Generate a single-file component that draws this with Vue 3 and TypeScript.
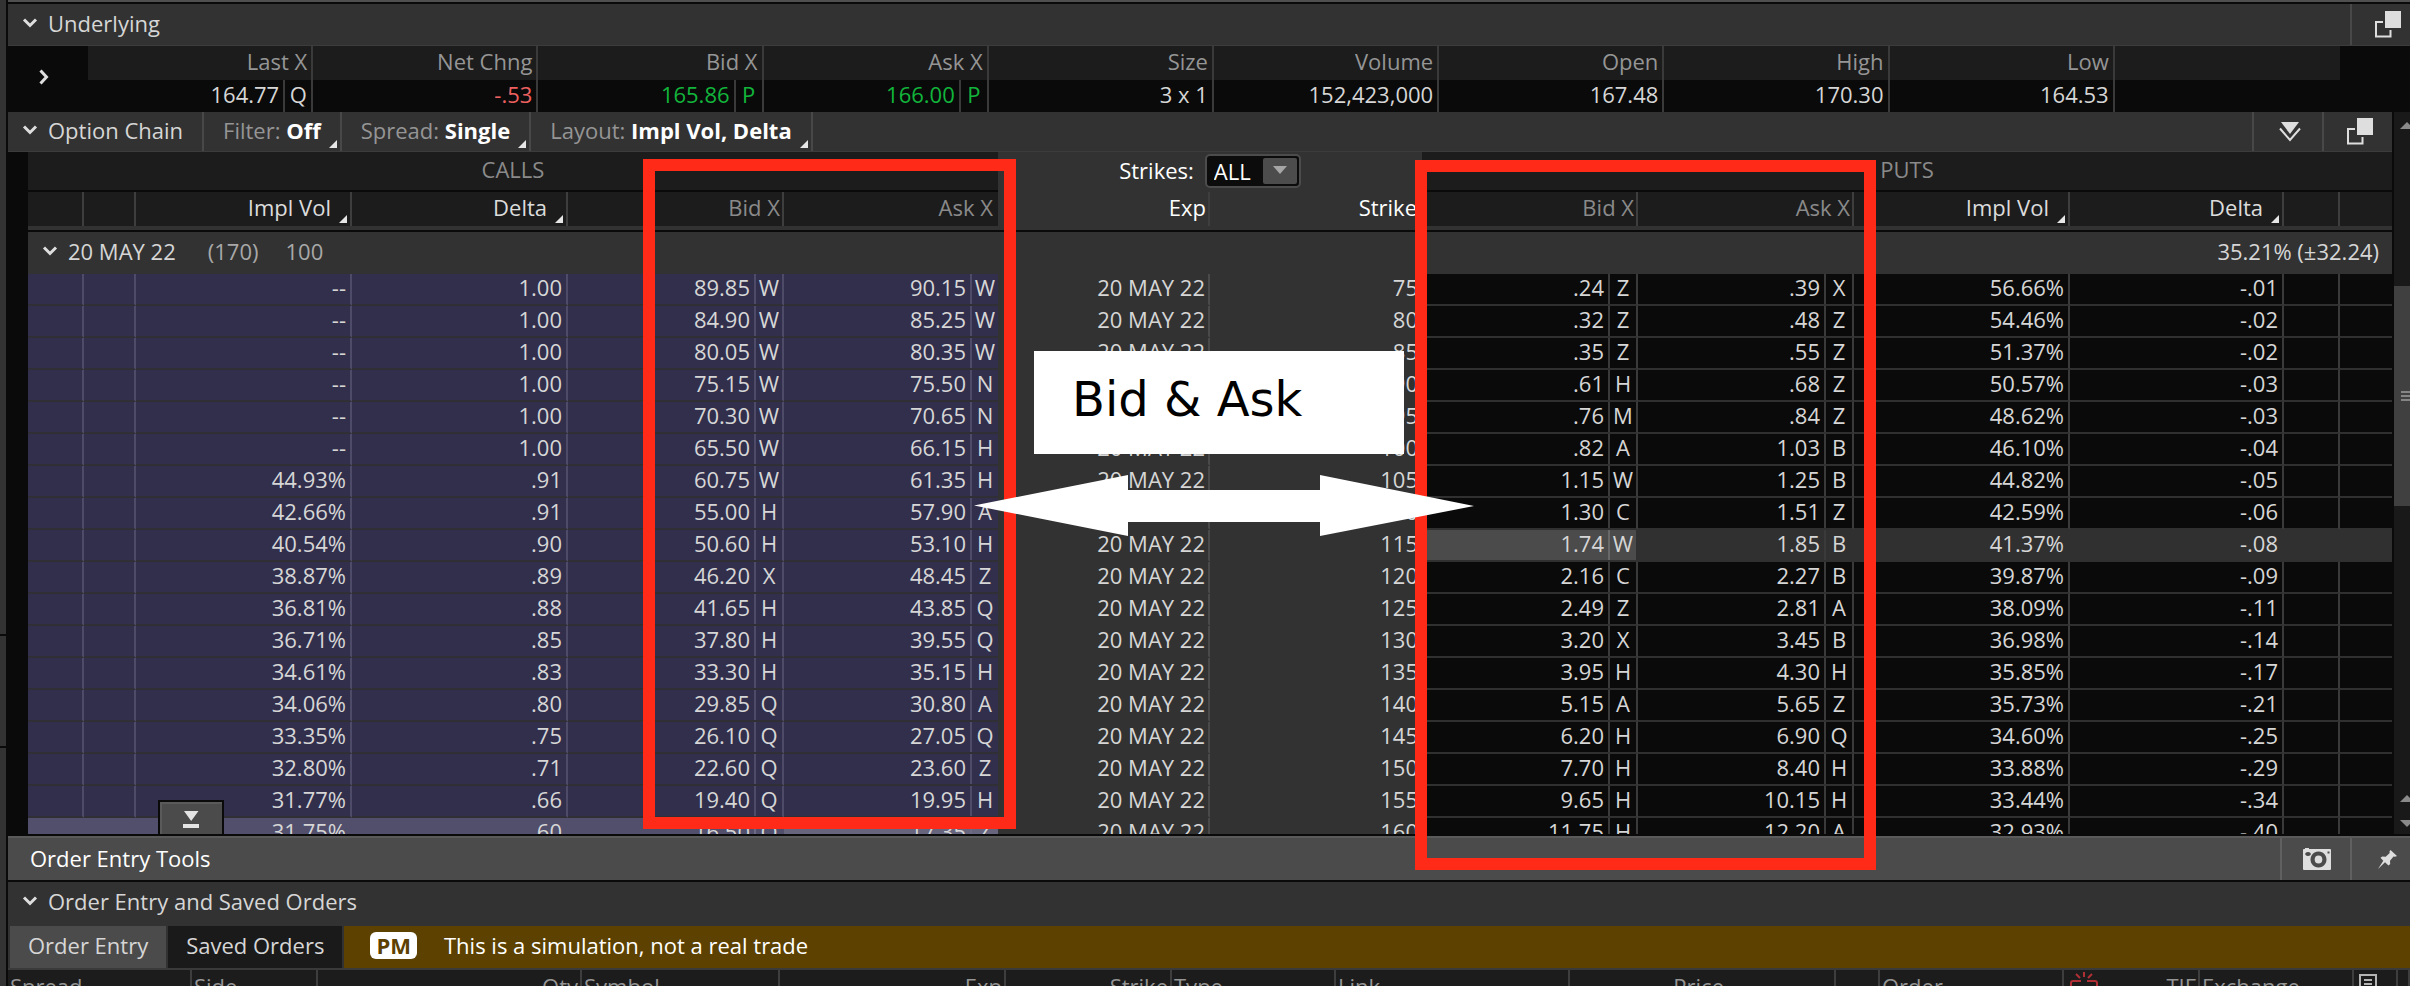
<script setup lang="ts">
import { ref } from 'vue'

interface Quote {
  label: string
  value: string
  exchange?: string
  tone?: 'up' | 'down'
}

interface Side {
  iv: string
  delta: string
  bid: string
  bidX: string
  ask: string
  askX: string
}

interface Row {
  strike: string
  call: Side
  put: Side
}

const quotes: Quote[] = [
  { label: 'Last X', value: '164.77', exchange: 'Q' },
  { label: 'Net Chng', value: '-.53', tone: 'down' },
  { label: 'Bid X', value: '165.86', exchange: 'P', tone: 'up' },
  { label: 'Ask X', value: '166.00', exchange: 'P', tone: 'up' },
  { label: 'Size', value: '3 x 1' },
  { label: 'Volume', value: '152,423,000' },
  { label: 'Open', value: '167.48' },
  { label: 'High', value: '170.30' },
  { label: 'Low', value: '164.53' },
  { label: '', value: '' },
]

const filters = [
  { name: 'Filter:', value: 'Off' },
  { name: 'Spread:', value: 'Single' },
  { name: 'Layout:', value: 'Impl Vol, Delta' },
]

// call IV, delta, bid, X, ask, X | strike | put bid, X, ask, X, IV, delta
const source = `
-- 1.00 89.85 W 90.15 W 75 .24 Z .39 X 56.66% -.01
-- 1.00 84.90 W 85.25 W 80 .32 Z .48 Z 54.46% -.02
-- 1.00 80.05 W 80.35 W 85 .35 Z .55 Z 51.37% -.02
-- 1.00 75.15 W 75.50 N 90 .61 H .68 Z 50.57% -.03
-- 1.00 70.30 W 70.65 N 95 .76 M .84 Z 48.62% -.03
-- 1.00 65.50 W 66.15 H 100 .82 A 1.03 B 46.10% -.04
44.93% .91 60.75 W 61.35 H 105 1.15 W 1.25 B 44.82% -.05
42.66% .91 55.00 H 57.90 A 110 1.30 C 1.51 Z 42.59% -.06
40.54% .90 50.60 H 53.10 H 115 1.74 W 1.85 B 41.37% -.08
38.87% .89 46.20 X 48.45 Z 120 2.16 C 2.27 B 39.87% -.09
36.81% .88 41.65 H 43.85 Q 125 2.49 Z 2.81 A 38.09% -.11
36.71% .85 37.80 H 39.55 Q 130 3.20 X 3.45 B 36.98% -.14
34.61% .83 33.30 H 35.15 H 135 3.95 H 4.30 H 35.85% -.17
34.06% .80 29.85 Q 30.80 A 140 5.15 A 5.65 Z 35.73% -.21
33.35% .75 26.10 Q 27.05 Q 145 6.20 H 6.90 Q 34.60% -.25
32.80% .71 22.60 Q 23.60 Z 150 7.70 H 8.40 H 33.88% -.29
31.77% .66 19.40 Q 19.95 H 155 9.65 H 10.15 H 33.44% -.34
31.75% .60 16.50 Q 17.35 Z 160 11.75 H 12.20 A 32.93% -.40`

const rows: Row[] = source.trim().split('\n').map((line) => {
  const c = line.split(' ')
  return {
    strike: c[6],
    call: { iv: c[0], delta: c[1], bid: c[2], bidX: c[3], ask: c[4], askX: c[5] },
    put: { bid: c[7], bidX: c[8], ask: c[9], askX: c[10], iv: c[11], delta: c[12] },
  }
})

const strikes = ref('ALL')
const tab = ref('Order Entry')
const tabs = ['Order Entry', 'Saved Orders']
</script>

<template>
  <div class="app">
    <aside class="rail"><i class="r1"></i><i class="r2"></i></aside>
    <main class="main">
      <header class="bar underlying">
        <button class="title">
          <svg class="chev" viewBox="0 0 16 10"><path d="M2 1.500 8 7.500 14 1.500" /></svg>Underlying
        </button>
        <button class="tool short" aria-label="Detach underlying">
          <svg class="pop" viewBox="0 0 26 27"><path d="M10 0h16v17H10z" fill="#dedede" /><path d="M8 11H1v14.500h14.500V19" fill="none" stroke="#dedede" stroke-width="2" /></svg>
        </button>
      </header>

      <section class="quote">
        <button class="expand" aria-label="Expand">
          <svg viewBox="0 0 10 16"><path d="M1.500 1.500 7.500 8 1.500 14.500" /></svg>
        </button>
        <div class="quote-body">
          <table class="qt">
            <thead>
              <tr><th v-for="q in quotes" :key="q.label">{{ q.label }}</th></tr>
            </thead>
            <tbody>
              <tr>
                <td v-for="q in quotes" :key="q.label" :class="q.tone">
                  <div class="pair"><span class="num">{{ q.value }}</span><span v-if="q.exchange" class="ex">{{ q.exchange }}</span></div>
                </td>
              </tr>
            </tbody>
          </table>
        </div>
      </section>

      <section class="chain-area">
        <div class="chain">
          <header class="bar option">
            <button class="title lined">
              <svg class="chev" viewBox="0 0 16 10"><path d="M2 1.500 8 7.500 14 1.500" /></svg>Option Chain
            </button>
            <button v-for="f in filters" :key="f.name" class="filter corner">{{ f.name }} <b>{{ f.value }}</b></button>
            <span class="grow"></span>
            <button class="tool" aria-label="Collapse all">
              <svg class="down" viewBox="0 0 22 20"><path d="M2 0h18l-9 12z" fill="#dedede" /><path d="M1 6.500 11 18 21 6.500" fill="none" stroke="#dedede" stroke-width="2" /></svg>
            </button>
            <button class="tool" aria-label="Detach option chain">
              <svg class="pop" viewBox="0 0 26 27"><path d="M10 0h16v17H10z" fill="#dedede" /><path d="M8 11H1v14.500h14.500V19" fill="none" stroke="#dedede" stroke-width="2" /></svg>
            </button>
          </header>

          <table class="ct">
            <colgroup>
              <col class="w56" /><col class="w52" /><col class="w216" /><col class="w216" /><col class="w216" /><col class="w214" />
              <col class="w212" /><col class="w212" />
              <col class="w216" /><col class="w216" /><col class="w216" /><col class="w214" /><col class="w56" /><col class="w52" />
            </colgroup>
            <thead>
              <tr class="sides">
                <th colspan="6">CALLS</th>
                <th colspan="2" class="mid">
                  <div class="strikes">
                    <label for="strikes">Strikes:</label>
                    <span class="select">
                      <select id="strikes" v-model="strikes"><option>ALL</option></select>
                      <span class="drop"><svg viewBox="0 0 14 8"><path d="M0 0h14L7 8z" fill="#a6a6a6" /></svg></span>
                    </span>
                  </div>
                </th>
                <th colspan="6">PUTS</th>
              </tr>
              <tr class="cols">
                <th></th><th></th>
                <th class="sort corner">Impl Vol</th><th class="sort corner">Delta</th>
                <th>Bid X</th><th class="open">Ask X</th>
                <th class="mid">Exp</th><th class="mid open">Strike</th>
                <th>Bid X</th><th>Ask X</th>
                <th class="sort corner">Impl Vol</th><th class="sort corner">Delta</th>
                <th></th><th class="open"></th>
              </tr>
              <tr class="rule"><td colspan="14"></td></tr>
            </thead>
            <tbody>
              <tr class="group">
                <th colspan="14">
                  <div class="groupline">
                    <button class="gtitle">
                      <svg class="chev" viewBox="0 0 16 10"><path d="M2 1.500 8 7.500 14 1.500" /></svg>20 MAY 22
                    </button>
                    <span class="dim">(170)</span><span class="dim">100</span>
                    <span class="move">35.21% (±32.24)</span>
                  </div>
                </th>
              </tr>
              <tr v-for="r in rows" :key="r.strike" :class="{ hover: r.strike === '115', otm: r.strike === '160' }">
                <td class="call"></td><td class="call"></td>
                <td class="call pad">{{ r.call.iv }}</td>
                <td class="call pad">{{ r.call.delta }}</td>
                <td class="call"><div class="pair"><span class="num">{{ r.call.bid }}</span><span class="ex">{{ r.call.bidX }}</span></div></td>
                <td class="call open ask"><div class="pair"><span class="num">{{ r.call.ask }}</span><span class="ex">{{ r.call.askX }}</span></div></td>
                <td class="mid">20 MAY 22</td>
                <td class="mid open">{{ r.strike }}</td>
                <td class="put bid"><div class="pair"><span class="num">{{ r.put.bid }}</span><span class="ex">{{ r.put.bidX }}</span></div></td>
                <td class="put"><div class="pair"><span class="num">{{ r.put.ask }}</span><span class="ex">{{ r.put.askX }}</span></div></td>
                <td class="put pad">{{ r.put.iv }}</td>
                <td class="put pad">{{ r.put.delta }}</td>
                <td class="put"></td><td class="put open"></td>
              </tr>
            </tbody>
          </table>
        </div>
        <div class="scroll">
          <svg class="tri" viewBox="0 0 14 7"><path d="M7 0l7 7H0z" /></svg>
          <div class="track"><div class="thumb"><i></i><i></i><i></i></div></div>
          <svg class="tri" viewBox="0 0 14 7"><path d="M7 0l7 7H0z" /></svg>
          <svg class="tri last" viewBox="0 0 14 7"><path d="M7 7l7-7H0z" /></svg>
        </div>
        <button class="handle" aria-label="Collapse order entry tools">
          <svg viewBox="0 0 16 17"><path d="M1 0h14.500L8.200 10z M0 13h16v4H0z" fill="#e4e4e4" /></svg>
        </button>
      </section>

      <footer class="dock">
        <div class="bar tools">
          <span class="toolname">Order Entry Tools</span>
          <button class="tool" aria-label="Take snapshot">
            <svg class="cam" viewBox="0 0 28 22">
              <path fill-rule="evenodd" fill="#dedede" d="M2 0h4v1h21q1 0 1 1v19q0 1-1 1H1q-1 0-1-1V2q0-1 1-1h1zM15.500 3.500a8 8 0 1 0 .01 0zM5 4a2.800 2 0 1 0 .01 0zM24.500 3.500v2h2v-2z" />
              <ellipse cx="15.500" cy="11.500" rx="3.800" ry="4" fill="#dedede" />
            </svg>
          </button>
          <button class="tool short" aria-label="Pin">
            <svg class="pin" viewBox="0 0 19 19"><path fill="#dedede" d="M12.500 0 19 6l-2 .8-1.500-.2-3.500 4.200.2 3.200-1.700 1.500-3.500-3.300L0 19l5.300-8.200L2.500 7.800 4.300 6.500l3.400.3 4-3.800-.2-1.800z" /></svg>
          </button>
        </div>
        <div class="bar saved">
          <button class="title"><svg class="chev" viewBox="0 0 16 10"><path d="M2 1.500 8 7.500 14 1.500" /></svg>Order Entry and Saved Orders</button>
        </div>
        <div class="tabs">
          <button v-for="t in tabs" :key="t" class="tab" :class="{ on: tab === t }" @click="tab = t">{{ t }}</button>
          <div class="notice"><b>PM</b><span>This is a simulation, not a real trade</span></div>
        </div>
        <table class="ot">
          <colgroup>
            <col class="o184" /><col class="o126" /><col class="o264" /><col class="o198" /><col class="o226" /><col class="o166" /><col class="o164" /><col class="o234" /><col class="o266" /><col class="o44" /><col class="o184" /><col class="o136" /><col class="o154" /><col class="o44" /><col class="o12" />
          </colgroup>
          <thead>
            <tr>
              <th>Spread</th><th>Side</th><th class="right">Qty</th><th>Symbol</th><th class="right">Exp</th><th class="right">Strike</th><th>Type</th><th>Link</th>
              <th class="right price">Price</th><th></th><th>Order</th>
              <th>
                <div class="tif">
                  <svg class="link" viewBox="0 0 28 24"><path d="M1 23V11q0-2 2-2h8M17 9h8q2 0 2 2v12M14 0v5M6 2l4 4M22 2l-4 4" fill="none" stroke="#b02f35" stroke-width="2" /></svg>
                  <span>TIF</span>
                </div>
              </th>
              <th>Exchange</th>
              <th><svg class="doc" viewBox="0 0 24 24"><path d="M1 24V1h16v12M5 6h8M5 10h8M5 14h8M20 12v10M16 18l4 4 4-4" fill="none" stroke="#b4b4b4" stroke-width="2" /></svg></th>
              <th></th>
            </tr>
          </thead>
        </table>
      </footer>
    </main>

    <div class="mark calls-mark"></div>
    <div class="mark puts-mark"></div>
    <div class="callout">Bid &amp; Ask</div>
    <svg class="arrow" viewBox="0 0 500 62"><path fill="#fff" d="M0 30.500 154 0v15h192V0l154 31-154 30V47H154v14z" /></svg>
  </div>
</template>

<style>
body {
  margin: 0;
  background: #0a0a0a;
  overflow: hidden;
}
</style>

<style scoped>
* {
  box-sizing: border-box;
}
.app {
  position: relative;
  display: flex;
  height: 100vh;
  overflow: hidden;
  background: #0a0a0a;
  color: #d6d6d6;
  font: 22px/28px "Open Sans", "Noto Sans", sans-serif;
}
button,
select {
  font: inherit;
  color: inherit;
  background: none;
  border: 0;
  margin: 0;
  padding: 0;
  text-align: left;
  white-space: nowrap;
}
svg {
  display: block;
  flex: none;
}
table {
  width: 100%;
  table-layout: fixed;
  border-collapse: separate;
  border-spacing: 0;
}
th,
td {
  padding: 0;
  font-weight: 400;
  white-space: nowrap;
}
.rail {
  flex: 0 0 6px;
  margin-right: 2px;
  background: #333;
  display: flex;
  flex-direction: column;
}
.rail i {
  height: 2px;
  background: #0a0a0a;
}
.r1 {
  margin-top: 634px;
}
.r2 {
  margin-top: 110px;
}
.main {
  flex: 1;
  min-width: 0;
  display: flex;
  flex-direction: column;
  border-top: 2px solid #4f4f4f;
  padding-top: 2px;
}
.bar {
  display: flex;
  align-items: stretch;
  background: #323232;
  flex: none;
}
.underlying {
  height: 42px;
  justify-content: space-between;
  border-bottom: 1px solid #3c3c3c;
}
.title {
  display: flex;
  align-items: center;
  padding: 0 19px 4px 14px;
}
.chev {
  width: 16px;
  height: 10px;
  margin-right: 10px;
  fill: none;
  stroke: #dedede;
  stroke-width: 3;
}
.tool {
  width: 70px;
  border-left: 2px solid #484848;
  padding-left: 23px;
  display: flex;
  align-items: center;
}
.short {
  width: 60px;
}
.pop {
  width: 26px;
  height: 27px;
}
.down {
  width: 22px;
  height: 20px;
  margin-left: 2px;
}
.quote {
  display: flex;
  flex: none;
  height: 66px;
  padding-right: 70px;
}
.expand {
  width: 80px;
  padding: 0 0 4px 31px;
}
.expand svg {
  width: 10px;
  height: 16px;
  fill: none;
  stroke: #dedede;
  stroke-width: 3;
}
.quote-body {
  flex: 1;
  min-width: 0;
}
.qt th {
  height: 34px;
  padding: 0 4px 4px 0;
  background: #1c1c1c;
  color: #959595;
  text-align: right;
}
.qt th,
.qt td {
  border-right: 2px solid #3a3a3a;
}
.qt th:last-child,
.qt td:last-child {
  border-right: 0;
}
.qt td {
  height: 32px;
}
.qt .pair {
  height: 32px;
  line-height: 28px;
}
.qt .up {
  color: #12b53b;
}
.qt .down {
  color: #ee6060;
}
.pair {
  display: flex;
  justify-content: flex-end;
  height: 30px;
  line-height: 26px;
}
.num {
  padding-right: 4px;
}
.ex {
  width: 28px;
  border-left: 2px solid #3a3a3a;
  text-align: center;
}
.chain-area {
  position: relative;
  flex: 1;
  min-height: 0;
  overflow: hidden;
  display: flex;
}
.chain {
  flex: 1;
  min-width: 0;
}
.option {
  height: 40px;
  border-bottom: 1px solid #3c3c3c;
}
.lined {
  border-right: 2px solid #484848;
}
.filter {
  padding: 0 19px 4px;
  border-right: 2px solid #484848;
  color: #959595;
}
.filter b {
  color: #fff;
}
.corner {
  position: relative;
}
.corner::after {
  content: "";
  position: absolute;
  right: 3px;
  bottom: 3px;
  border-left: 8px solid transparent;
  border-bottom: 8px solid #e6e6e6;
}
.grow {
  flex: 1;
}
.ct {
  border-left: 20px solid #0a0a0a;
}
.w52 { width: 52px; }
.w56 { width: 56px; }
.w212 { width: 212px; }
.w214 { width: 214px; }
.w216 { width: 216px; }
.sides th {
  height: 40px;
  padding-bottom: 4px;
  background: #1c1c1c;
  border-bottom: 2px solid #0a0a0a;
  color: #8a8a8a;
  text-align: center;
}
.ct .mid {
  background: #323232;
  color: #fff;
  text-align: right;
}
.ct .sides .mid {
  border-color: #323232;
  text-align: center;
  padding: 0;
}
.strikes {
  display: flex;
  align-items: center;
  justify-content: center;
  gap: 11px;
}
.strikes label {
  padding-bottom: 2px;
}
.select {
  position: relative;
  width: 96px;
  height: 34px;
}
.select select {
  appearance: none;
  width: 100%;
  height: 100%;
  padding: 0 38px 0 7px;
  border: 2px solid #4c4c4c;
  border-radius: 5px;
  background: #0c0c0c;
  color: #fff;
}
.drop {
  position: absolute;
  top: 4px;
  right: 4px;
  width: 34px;
  height: 26px;
  border-radius: 2px;
  background: #4c4c4c;
  pointer-events: none;
}
.drop svg {
  width: 14px;
  height: 8px;
  margin: 8px 10px;
}
.cols th {
  height: 34px;
  padding: 0 2px 4px 0;
  background: #1c1c1c;
  border-right: 2px solid #3e3e3e;
  color: #8a8a8a;
  text-align: right;
}
.cols .sort {
  padding-right: 19px;
  color: #dcdcdc;
}
.cols .open {
  border-right: 0;
  padding-right: 5px;
}
.rule td {
  height: 6px;
  background: #323232;
  border-bottom: 2px solid #0a0a0a;
}
.group th {
  height: 42px;
  background: #323232;
}
.groupline {
  display: flex;
  padding: 0 13px 4px 14px;
}
.gtitle {
  display: flex;
  align-items: center;
  margin-right: 32px;
}
.dim {
  margin-right: 27px;
  color: #a8a8a8;
}
.move {
  margin-left: auto;
}
tbody .call,
tbody .put,
tbody .mid {
  height: 32px;
  border-right: 2px solid #3a3a3a;
  border-bottom: 2px solid #303030;
  text-align: right;
}
tbody .pad {
  padding: 0 4px 4px 0;
  line-height: 26px;
}
tbody .call {
  background: #312f4c;
  border-right-color: #4d4b68;
  border-bottom-color: #2f2f35;
}
.call .ex {
  border-color: #4d4b68;
}
.ct tbody .mid {
  color: #d6d6d6;
  border-right-color: #4a4a4a;
  border-bottom-color: #323232;
  padding: 0 3px 4px 0;
  line-height: 26px;
}
tbody .put {
  background: #0a0a0a;
}
.ct tbody .open {
  border-right: 0;
}
.ct tbody .mid.open {
  padding-right: 4px;
}
.hover .put {
  background: #303030;
  border-color: #303030;
}
.hover .bid {
  background: #4b4b4b;
}
.hover .bid .ex {
  border-color: #686868;
}
.otm .call {
  background: #514f6b;
  border-right-color: #514f6b;
}
.otm .call .ex {
  border-color: #6c6a84;
}
.otm .ask {
  background: #67657e;
}
.scroll {
  flex: 0 0 16px;
  margin-left: 2px;
  overflow: hidden;
  background: #191919;
  display: flex;
  flex-direction: column;
}
.tri {
  width: 14px;
  height: 7px;
  margin: 10px 0 0 6px;
  fill: #8a8a8a;
}
.track {
  flex: 1;
  padding-top: 157px;
}
.thumb {
  height: 220px;
  background: #404040;
  display: flex;
  flex-direction: column;
  justify-content: center;
  align-items: flex-end;
  gap: 2px;
}
.thumb i {
  width: 9px;
  height: 2px;
  background: #858585;
}
.last {
  margin-top: 18px;
  margin-bottom: 7px;
}
.handle {
  position: absolute;
  left: 150px;
  bottom: 0;
  width: 66px;
  height: 34px;
  padding-top: 2px;
  background: #4b4b4b;
  border: 2px solid #0a0a0a;
  border-bottom: 0;
  box-shadow: inset 2px 2px #5a5a5a;
}
.handle svg {
  width: 16px;
  height: 17px;
  margin: 0 auto;
}
.dock {
  flex: 0 0 152px;
  overflow: hidden;
  border-top: 2px solid #0a0a0a;
}
.tools {
  height: 46px;
  background: #4b4b4b;
  border-top: 2px solid #5a5a5a;
  border-bottom: 2px solid #0a0a0a;
  color: #fff;
}
.tools .tool {
  border-color: #606060;
  padding-left: 21px;
}
.toolname {
  flex: 1;
  align-self: center;
  padding: 0 0 3px 22px;
}
.cam {
  width: 28px;
  height: 22px;
}
.tools .short {
  padding-left: 26px;
}
.pin {
  width: 19px;
  height: 19px;
}
.saved {
  height: 44px;
}
.saved .title {
  padding-bottom: 6px;
}
.tabs {
  display: flex;
  height: 44px;
  border-bottom: 2px solid #3a3a3a;
  padding-left: 2px;
  gap: 2px;
  background: #323232;
}
.tab {
  padding: 0 18px 4px;
  background: #1a1a1a;
}
.on {
  background: #4b4b4b;
}
.notice {
  flex: 1;
  display: flex;
  align-items: center;
  padding: 0 0 4px 26px;
  background: #5c4100;
  color: #fff;
}
.notice b {
  padding: 0 6px;
  margin-right: 27px;
  border-radius: 6px;
  background: #fff;
  color: #5c4100;
  line-height: 27px;
}
.ot th {
  height: 34px;
  padding: 0 2px 2px;
  background: #1c1c1c;
  border-right: 2px solid #3e3e3e;
  color: #959595;
  text-align: left;
}
.ot .right {
  text-align: right;
}
.ot .price {
  padding-right: 110px;
}
.tif {
  display: flex;
  justify-content: space-between;
  padding-left: 4px;
}
.link {
  width: 28px;
  height: 24px;
}
.doc {
  width: 24px;
  height: 24px;
  margin-left: 3px;
}
.o12 { width: 12px; }
.o44 { width: 44px; }
.o126 { width: 126px; }
.o136 { width: 136px; }
.o154 { width: 154px; }
.o164 { width: 164px; }
.o166 { width: 166px; }
.o184 { width: 184px; }
.o198 { width: 198px; }
.o226 { width: 226px; }
.o234 { width: 234px; }
.o264 { width: 264px; }
.o266 { width: 266px; }
.mark {
  position: absolute;
  border: 12px solid #ff2a17;
}
.calls-mark {
  left: 643px;
  top: 159px;
  width: 373px;
  height: 670px;
}
.puts-mark {
  left: 1415px;
  top: 160px;
  width: 461px;
  height: 710px;
}
.callout {
  position: absolute;
  left: 1034px;
  top: 351px;
  width: 370px;
  height: 103px;
  padding-left: 38px;
  background: #fff;
  color: #000;
  font: 48px/96px "DejaVu Sans", sans-serif;
}
.arrow {
  position: absolute;
  left: 974px;
  top: 475px;
  width: 500px;
  height: 62px;
}
</style>
